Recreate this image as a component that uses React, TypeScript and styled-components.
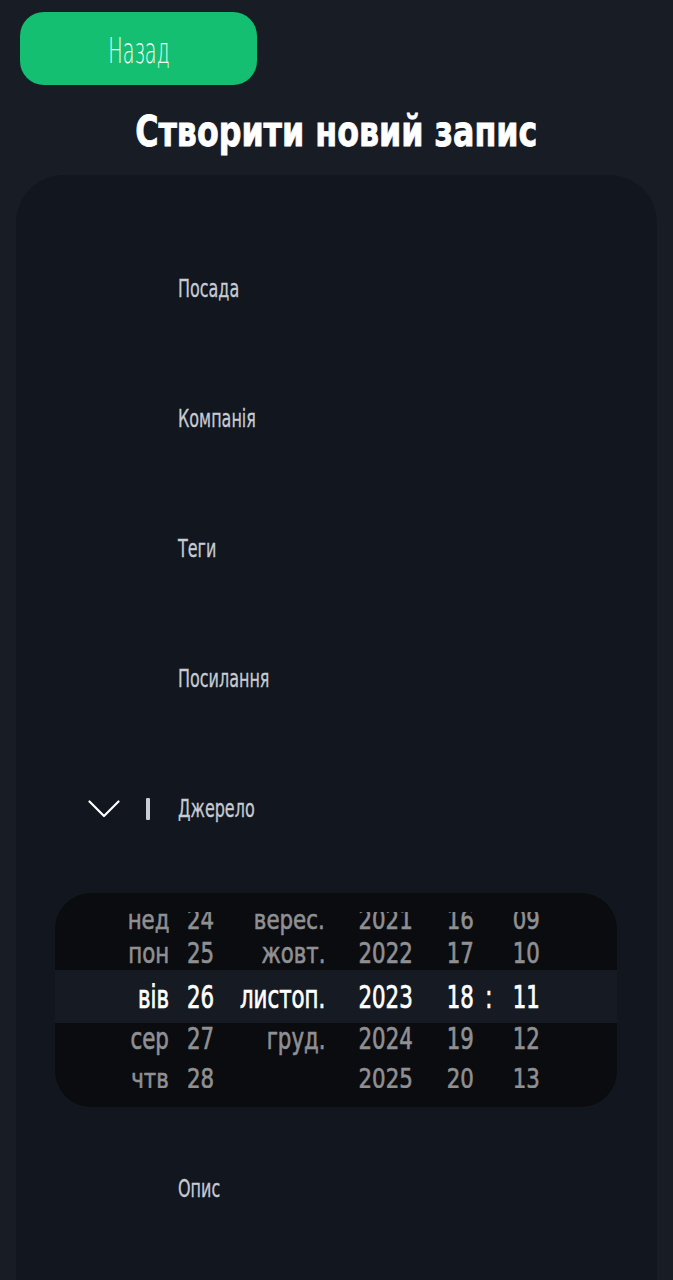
import React from "react";
import styled, { createGlobalStyle } from "styled-components";

const GlobalStyle = createGlobalStyle`
  html, body {
    margin: 0;
    padding: 0;
    background: #171c25;
  }
  body {
    font-family: "DejaVu Sans Condensed", "DejaVu Sans", sans-serif;
    color: #ffffff;
  }
`;

// the reference font is much narrower than anything installed, so text gets squeezed
const Squeeze = styled.span<{ $x: number; $y?: number; $origin?: string; $dy?: number }>`
  display: inline-block;
  white-space: nowrap;
  transform: translateY(${({ $dy }) => $dy ?? 0}px) scale(${({ $x }) => $x}, ${({ $y }) => $y ?? 1});
  transform-origin: ${({ $origin }) => $origin ?? "left center"};
`;

const Page = styled.div`
  width: 673px;
  height: 1280px;
  overflow: hidden;
  display: flex;
  flex-direction: column;
  padding: 12px 16px 0;
  box-sizing: border-box;
`;

const BackButton = styled.button`
  margin-left: 4px;
  width: 237px;
  height: 73px;
  flex: none;
  border: none;
  border-radius: 24px;
  background: #14bf72;
  color: #f2fff8;
  font-family: "DejaVu Sans", sans-serif;
  font-size: 35px;
  font-weight: 200;
  line-height: 1;
  padding: 5px 0 0;
  cursor: pointer;
`;

const Title = styled.h1`
  margin: 20px 0 0;
  height: 70px;
  flex: none;
  text-align: center;
  font-size: 43px;
  font-weight: 700;
  line-height: 52px;
  -webkit-text-stroke: 0.8px #ffffff;
`;

const Card = styled.section`
  flex: 1;
  background: #12171f;
  border-radius: 48px 48px 0 0;
  padding-top: 49px;
  display: flex;
  flex-direction: column;
`;

const FieldRow = styled.div`
  height: 130px;
  flex: none;
  display: flex;
  align-items: center;
  padding-left: 72px;
`;

const IconSlot = styled.div`
  width: 90px;
  display: flex;
  align-items: center;
  gap: 26px;
`;

const Caret = styled.span`
  width: 4px;
  height: 22px;
  background: #c9cdd6;
  border-radius: 1px;
`;

const Label = styled.span`
  font-size: 24px;
  line-height: 1;
  color: #c6cbd4;
  -webkit-text-stroke: 0.3px #c6cbd4;
`;

const Picker = styled.div`
  margin: 19px 40px 17px 39px;
  height: 214px;
  flex: none;
  border-radius: 36px;
  background: #0a0c10;
  padding: 19px 0;
  box-sizing: border-box;
`;

const Wheel = styled.div`
  height: 176px;
  overflow: hidden;
  display: flex;
  flex-direction: column;
`;

const WheelRow = styled.div<{ $h: number; $active?: boolean }>`
  height: ${({ $h }) => $h}px;
  flex: none;
  display: grid;
  grid-template-columns: 114px 56px 100px 121px 28px 30px 45px;
  align-items: stretch;
  background: ${({ $active }) => ($active ? "#161b23" : "transparent")};
  color: ${({ $active }) => ($active ? "#ffffff" : "#909093")};
  -webkit-text-stroke: 0.7px ${({ $active }) => ($active ? "#ffffff" : "#909093")};
  font-size: 32px;
  line-height: 1;
`;

const justify = { left: "flex-start", right: "flex-end", center: "center" };

const Cell = styled.div<{ $align: "left" | "right" | "center"; $pad?: number }>`
  display: flex;
  align-items: center;
  justify-content: ${({ $align }) => justify[$align]};
  padding-left: ${({ $pad }) => $pad ?? 0}px;
  min-height: 0;
`;

const Chevron = () => (
  <svg width="32" height="18" viewBox="0 0 32 18" fill="none">
    <path d="M1.5 1.5 L16 16 L30.5 1.5" stroke="#ffffff" strokeWidth="2.2" strokeLinecap="round" strokeLinejoin="round" />
  </svg>
);

type WheelItem = {
  day: string;
  date: string;
  month: string;
  year: string;
  hour: string;
  minute: string;
  h: number;
  squash: number;
  dy: number;
  active?: boolean;
};

const wheel: WheelItem[] = [
  { day: "нед", date: "24", month: "верес.", year: "2021", hour: "16", minute: "09", h: 16, squash: 0.84, dy: 0 },
  { day: "пон", date: "25", month: "жовт.", year: "2022", hour: "17", minute: "10", h: 42, squash: 0.86, dy: 5 },
  { day: "вів", date: "26", month: "листоп.", year: "2023", hour: "18", minute: "11", h: 53, squash: 1, dy: 0, active: true },
  { day: "сер", date: "27", month: "груд.", year: "2024", hour: "19", minute: "12", h: 40, squash: 0.94, dy: -4 },
  { day: "чтв", date: "28", month: "", year: "2025", hour: "20", minute: "13", h: 25, squash: 0.84, dy: 3 },
];

const fieldsTop = ["Посада", "Компанія", "Теги", "Посилання"];

const SX = 0.74;

export default function App() {
  return (
    <>
      <GlobalStyle />
      <Page>
        <BackButton>
          <Squeeze $x={0.55} $origin="center">Назад</Squeeze>
        </BackButton>
        <Title>
          <Squeeze $x={0.82} $origin="center">Створити новий запис</Squeeze>
        </Title>
        <Card>
          {fieldsTop.map((f) => (
            <FieldRow key={f}>
              <IconSlot />
              <Label>
                <Squeeze $x={0.74}>{f}</Squeeze>
              </Label>
            </FieldRow>
          ))}
          <FieldRow>
            <IconSlot>
              <Chevron />
              <Caret />
            </IconSlot>
            <Label>
              <Squeeze $x={0.74}>Джерело</Squeeze>
            </Label>
          </FieldRow>
          <Picker>
            <Wheel>
              {wheel.map((w) => (
                <WheelRow key={w.date} $h={w.h} $active={w.active}>
                  <Cell $align="right">
                    <Squeeze $x={SX} $y={w.squash} $dy={w.dy} $origin="right center">{w.day}</Squeeze>
                  </Cell>
                  <Cell $align="left" $pad={18}>
                    <Squeeze $x={SX} $y={w.squash} $dy={w.dy}>{w.date}</Squeeze>
                  </Cell>
                  <Cell $align="right">
                    <Squeeze $x={SX} $y={w.squash} $dy={w.dy} $origin="right center">{w.month}</Squeeze>
                  </Cell>
                  <Cell $align="center">
                    <Squeeze $x={SX} $y={w.squash} $dy={w.dy} $origin="center">{w.year}</Squeeze>
                  </Cell>
                  <Cell $align="center">
                    <Squeeze $x={SX} $y={w.squash} $dy={w.dy} $origin="center">{w.hour}</Squeeze>
                  </Cell>
                  <Cell $align="center">
                    <Squeeze $x={SX} $y={w.squash} $dy={w.dy} $origin="center">{w.active ? ":" : ""}</Squeeze>
                  </Cell>
                  <Cell $align="center">
                    <Squeeze $x={SX} $y={w.squash} $dy={w.dy} $origin="center">{w.minute}</Squeeze>
                  </Cell>
                </WheelRow>
              ))}
            </Wheel>
          </Picker>
          <FieldRow>
            <IconSlot />
            <Label>
              <Squeeze $x={0.74}>Опис</Squeeze>
            </Label>
          </FieldRow>
        </Card>
      </Page>
    </>
  );
}
